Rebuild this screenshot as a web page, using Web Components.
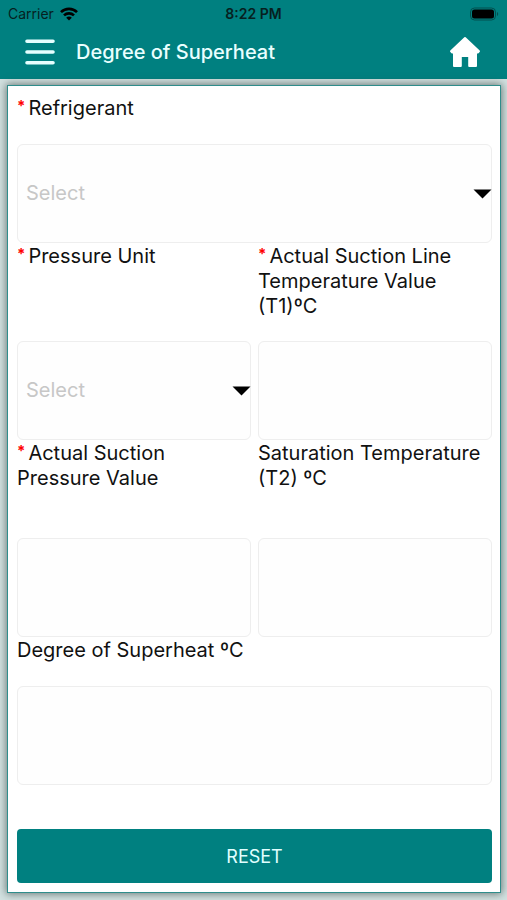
<!DOCTYPE html>
<html lang="en">
<head>
<meta charset="utf-8">
<meta name="viewport" content="width=device-width, initial-scale=1">
<title>Degree of Superheat</title>
<style>
  html { --teal: #008080; --line: #eeeeee; }
  body {
    margin: 0; min-height: 100vh; background: #d3e2e1; color: #111;
    font-family: Inter, "Liberation Sans", sans-serif; font-size: 20px; line-height: 25px;
  }
</style>
</head>
<body>
<superheat-app></superheat-app>
<script>
const define = (name, html, setup) => {
  const tpl = document.createElement('template');
  tpl.innerHTML = html;
  customElements.define(name, class extends HTMLElement {
    constructor() {
      super();
      this.attachShadow({ mode: 'open' }).append(tpl.content.cloneNode(true));
    }
    connectedCallback() { if (setup) setup(this, this.shadowRoot); }
  });
};

define('status-bar', `
<style>
  :host { display: grid; grid-template-columns: 1fr auto 1fr; align-items: center; height: 27px;
    padding: 0 8px; background: var(--teal); color: #06201f; font-size: 14px; line-height: 20px; }
  .left { display: flex; align-items: center; gap: 6px; }
  .time { font-weight: 600; }
  .right { justify-self: end; }
  svg { display: block; }
</style>
<div class="left"><span>Carrier</span>
  <svg width="18" height="14" viewBox="0 0 18 14" fill="none" stroke="#000" stroke-width="2.6" aria-hidden="true">
    <path d="M1 5.2C5.4.7 12.6.7 17 5.2"/><path d="M4 8.4c2.8-2.7 7.2-2.7 10 0"/>
    <path d="M9 13.4 6.2 10.7c1.6-1.5 4-1.5 5.6 0z" fill="#000" stroke="none"/>
  </svg>
</div>
<span class="time">8:22 PM</span>
<svg class="right" width="30" height="14" viewBox="0 0 30 14" aria-hidden="true">
  <rect x="1.5" y="1" width="25" height="12" rx="4" fill="none" stroke="#034f4e"/>
  <rect x="3" y="2.5" width="22" height="9" rx="2.5" fill="#000"/>
  <path d="M28 5v4c1.600-.6 1.600-3.400 0-4z" fill="#034f4e"/>
</svg>`);

define('app-header', `
<style>
  :host { display: flex; align-items: center; height: 52px; box-sizing: border-box;
    padding: 0 24px 2px 22px; background: var(--teal); color: #fff; }
  h1 { flex: 1; margin: 0 0 0 18px; font-size: 20px; line-height: 25px; font-weight: 500; color: #e9ffff; }
  button { display: grid; place-items: center; width: 36px; height: 36px; margin: 0; padding: 0;
    border: 0; background: none; color: inherit; }
  svg { display: block; }
</style>
<button type="button" aria-label="Menu">
  <svg width="30" height="28" viewBox="0 0 30 28" fill="none" stroke="#e6ffff" stroke-width="3.6" stroke-linecap="round">
    <path d="M2 3.300h26M2 14h26M2 24.700h26"/></svg>
</button>
<h1><slot></slot></h1>
<button type="button" aria-label="Home">
  <svg width="32" height="32" viewBox="0 0 32 32" fill="#fff" stroke="#fff" stroke-width="2" stroke-linejoin="round">
    <path d="M16 2 2 15.200l1 1.300h2V30h6.800V20h8.400v10H27V16.500h2l1-1.300z"/></svg>
</button>`);

const fieldStyle = `
  :host { display: block; min-width: 0; }
  label { display: block; box-sizing: border-box; min-height: var(--label-height, 49px); padding-top: 1px; }
  .star { color: #f00; font-size: 15px; font-weight: 700; line-height: 15px; margin-right: 3px; vertical-align: 4px; }
  :host(:not([required])) .star { display: none; }
  input, select { display: block; box-sizing: border-box; width: 100%; height: 99px; margin: 0; padding: 0 8px;
    border: 1px solid var(--line); border-radius: 6px; background: #fefefe; color: #111; font: inherit; }`;
const syncRequired = (host, root) => {
  root.querySelector('input, select').required = host.hasAttribute('required');
};

define('text-field', `
<style>${fieldStyle}</style>
<label for="control"><span class="star" aria-hidden="true">*</span><slot></slot></label>
<input id="control" type="text">`, syncRequired);

define('select-field', `
<style>${fieldStyle}
  .box { display: grid; align-items: center; }
  .box > * { grid-area: 1 / 1; }
  select { appearance: none; color: #c7c7c7; }
  svg { justify-self: end; display: block; pointer-events: none; }
</style>
<label for="control"><span class="star" aria-hidden="true">*</span><slot></slot></label>
<div class="box">
  <select id="control"><option value="">Select</option></select>
  <svg width="19" height="10" viewBox="0 0 19 10" aria-hidden="true"><path d="M.5.5h18L9.5 9.5z"/></svg>
</div>`, syncRequired);

define('form-card', `
<style>
  :host { display: block; margin: 6px 6px 6px 7px; padding: 9px 8px 9px 9px; background: #fff;
    border: 1px solid #2f8d8b; box-shadow: 0 0 8px 1px rgba(50, 65, 62, .65); }
</style>
<slot></slot>`);

define('action-button', `
<style>
  :host { display: block; }
  button { display: block; width: 100%; height: 54px; margin: 0; padding: 0; border: 0; border-radius: 4px;
    background: var(--teal); color: #e0ffff; font: inherit; font-size: 18px; }
</style>
<button type="reset"><slot></slot></button>`);

define('superheat-app', `
<style>
  :host { display: block; }
  form { display: grid; grid-template-columns: 1fr 1fr; column-gap: 7px; }
  .wide { grid-column: 1 / -1; }
  .tall { --label-height: 98px; }
  action-button { margin-top: 44px; }
</style>
<status-bar></status-bar>
<app-header>Degree of Superheat</app-header>
<form-card>
  <form>
    <select-field class="wide" required>Refrigerant</select-field>
    <select-field class="tall" required>Pressure Unit</select-field>
    <text-field class="tall" required>Actual Suction Line Temperature Value (T1)ºC</text-field>
    <text-field class="tall" required>Actual Suction Pressure Value</text-field>
    <text-field class="tall">Saturation Temperature (T2) ºC</text-field>
    <text-field class="wide">Degree of Superheat ºC</text-field>
    <action-button class="wide">RESET</action-button>
  </form>
</form-card>`, (host, root) => {
  root.querySelector('action-button').addEventListener('click', () => {
    root.querySelectorAll('text-field, select-field').forEach((field) => {
      field.shadowRoot.querySelector('input, select').value = '';
    });
  });
});
</script>
</body>
</html>
